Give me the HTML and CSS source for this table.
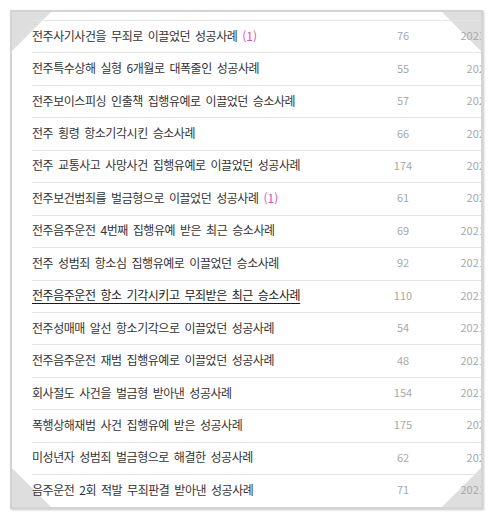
FILE: index.html
```html
<!DOCTYPE html>
<html lang="ko">
<head>
<meta charset="utf-8">
<title>성공사례</title>
<link rel="stylesheet" href="styles.css">
</head>
<body>
<div class="frame">
  <span class="corner tl"></span>
  <span class="corner tr"></span>
  <span class="corner bl"></span>
  <span class="corner br"></span>
  <ul class="list">
    <li class="row"><a class="title" href="#">전주사기사건을 무죄로 이끌었던 성공사례 <span class="cmt">(1)</span></a><span class="num">76</span><span class="date">2021.12.27</span></li>
    <li class="row"><a class="title" href="#">전주특수상해 실형 6개월로 대폭줄인 성공사례</a><span class="num">55</span><span class="date">2022.1.5</span></li>
    <li class="row"><a class="title" href="#">전주보이스피싱 인출책 집행유예로 이끌었던 승소사례</a><span class="num">57</span><span class="date">2022.1.5</span></li>
    <li class="row"><a class="title" href="#">전주 횡령 항소기각시킨 승소사례</a><span class="num">66</span><span class="date">2022.1.5</span></li>
    <li class="row"><a class="title" href="#">전주 교통사고 사망사건 집행유예로 이끌었던 성공사례</a><span class="num">174</span><span class="date">2022.1.5</span></li>
    <li class="row"><a class="title" href="#">전주보건범죄를 벌금형으로 이끌었던 성공사례 <span class="cmt">(1)</span></a><span class="num">61</span><span class="date">2022.1.5</span></li>
    <li class="row"><a class="title" href="#">전주음주운전 4번째 집행유예 받은 최근 승소사례</a><span class="num">69</span><span class="date">2021.12.27</span></li>
    <li class="row"><a class="title" href="#">전주 성범죄 항소심 집행유예로 이끌었던 승소사례</a><span class="num">92</span><span class="date">2021.12.27</span></li>
    <li class="row"><a class="title hover" href="#">전주음주운전 항소 기각시키고 무죄받은 최근 승소사례</a><span class="num">110</span><span class="date">2021.12.27</span></li>
    <li class="row"><a class="title" href="#">전주성매매 알선 항소기각으로 이끌었던 성공사례</a><span class="num">54</span><span class="date">2021.12.27</span></li>
    <li class="row"><a class="title" href="#">전주음주운전 재범 집행유예로 이끌었던 성공사례</a><span class="num">48</span><span class="date">2021.12.27</span></li>
    <li class="row"><a class="title" href="#">회사절도 사건을 벌금형 받아낸 성공사례</a><span class="num">154</span><span class="date">2021.12.27</span></li>
    <li class="row"><a class="title" href="#">폭행상해재범 사건 집행유예 받은 성공사례</a><span class="num">175</span><span class="date">2022.1.5</span></li>
    <li class="row"><a class="title" href="#">미성년자 성범죄 벌금형으로 해결한 성공사례</a><span class="num">62</span><span class="date">2022.1.5</span></li>
    <li class="row"><a class="title" href="#">음주운전 2회 적발 무죄판결 받아낸 성공사례</a><span class="num">71</span><span class="date">2021.12.27</span></li>
  </ul>
</div>
</body>
</html>
```

FILE: styles.css
```css
html, body {
  margin: 0;
  padding: 0;
  background: #ffffff;
}

body {
  font-family: "Noto Sans CJK KR", "Noto Sans", sans-serif;
  padding: 10px 11px 12px 10px;
}

.frame {
  position: relative;
  box-sizing: border-box;
  width: 473px;
  height: 499px;
  border: 2px solid #d4d4d4;
  box-shadow: 1px 1px 2px rgba(0, 0, 0, 0.22);
  overflow: hidden;
  padding: 8px 0 0 20px;
  background: #fff;
}

.corner {
  position: absolute;
  width: 0;
  height: 0;
  z-index: 0;
}

.corner.tl {
  left: 0;
  top: 0;
  border-top: 39px solid #dedede;
  border-right: 39px solid transparent;
}

.corner.tr {
  right: 0;
  top: 0;
  border-top: 39px solid #dedede;
  border-left: 39px solid transparent;
}

.corner.bl {
  left: 0;
  bottom: 0;
  border-bottom: 39px solid #dedede;
  border-right: 39px solid transparent;
}

.corner.br {
  right: 0;
  bottom: 0;
  border-bottom: 39px solid #dedede;
  border-left: 39px solid transparent;
}

.list {
  position: relative;
  z-index: 1;
  list-style: none;
  margin: 0;
  padding: 0;
  width: 511px;
  border-top: 1px solid #e4e4e4;
}

.row {
  display: flex;
  align-items: center;
  box-sizing: border-box;
  height: 32.45px;
  padding-bottom: 3px;
  border-bottom: 1px solid #e4e4e4;
}

.title {
  flex: none;
  width: 341px;
  font-size: 12px;
  letter-spacing: -0.45px;
  word-spacing: 2px;
  color: #333;
  text-decoration: none;
  white-space: nowrap;
}

.title.hover {
  color: #1a1a1a;
  text-decoration: underline;
  text-underline-offset: 3px;
}

.cmt {
  color: #e050b0;
  letter-spacing: 0;
}

.num {
  flex: none;
  width: 60px;
  text-align: center;
  font-size: 11px;
  color: #a8a8a8;
}

.date {
  flex: none;
  width: 110px;
  text-align: center;
  font-size: 11px;
  color: #a8a8a8;
}
```
